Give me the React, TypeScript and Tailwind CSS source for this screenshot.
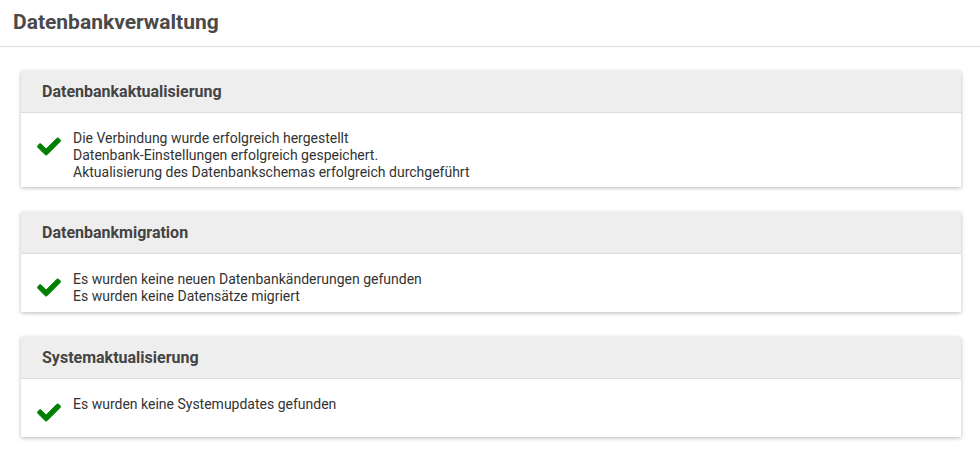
import React from 'react';

type Section = {
  title: string;
  lines: string[];
};

const sections: Section[] = [
  {
    title: 'Datenbankaktualisierung',
    lines: [
      'Die Verbindung wurde erfolgreich hergestellt',
      'Datenbank-Einstellungen erfolgreich gespeichert.',
      'Aktualisierung des Datenbankschemas erfolgreich durchgeführt',
    ],
  },
  {
    title: 'Datenbankmigration',
    lines: ['Es wurden keine neuen Datenbankänderungen gefunden', 'Es wurden keine Datensätze migriert'],
  },
  {
    title: 'Systemaktualisierung',
    lines: ['Es wurden keine Systemupdates gefunden'],
  },
];

const Check: React.FC = () => (
  <svg viewBox="-10 54 532 404" className="w-[24px] h-[19px] text-[#008000]" fill="currentColor">
    <path
      d="M173.898 439.404l-166.4-166.4c-9.997-9.997-9.997-26.206 0-36.204l36.203-36.204c9.997-9.998 26.207-9.998 36.204 0L192 312.69 432.095 72.596c9.997-9.997 26.207-9.997 36.204 0l36.203 36.204c9.997 9.997 9.997 26.206 0 36.204l-294.4 294.401c-9.998 9.997-26.207 9.997-36.204-.001z"
      stroke="currentColor"
      strokeWidth="22"
      strokeLinejoin="round"
    />
  </svg>
);

const App: React.FC = () => {
  return (
    <div className="min-h-screen bg-white font-['Roboto',sans-serif]">
      <div className="h-[47px] border-b border-[#dcdcdc] px-[13px] flex items-center">
        <h1 className="text-[21px] font-bold text-[#4a4a4a] leading-none -mt-[2px]">Datenbankverwaltung</h1>
      </div>

      <div className="pl-[21px] pr-[19px] pt-[24px] flex flex-col gap-[25px]">
        {sections.map((s) => (
          <div key={s.title} className="bg-white shadow-[0_1px_4px_rgba(0,0,0,0.28)]">
            <div className="h-[42px] bg-[#eeeeee] border-b border-[#dddddd] px-[21px] flex items-center">
              <h2 className="text-[16px] font-bold text-[#444444]">{s.title}</h2>
            </div>
            <div className="flex px-[16px] pt-[15px] pb-[6px]">
              <div className="w-[36px] h-[37px] shrink-0 pt-[9px]">
                <Check />
              </div>
              <div className="pt-[2px] text-[14px] leading-[17px] text-[#333333]">
                {s.lines.map((l) => (
                  <div key={l}>{l}</div>
                ))}
              </div>
            </div>
          </div>
        ))}
      </div>
    </div>
  );
};

export default App;
